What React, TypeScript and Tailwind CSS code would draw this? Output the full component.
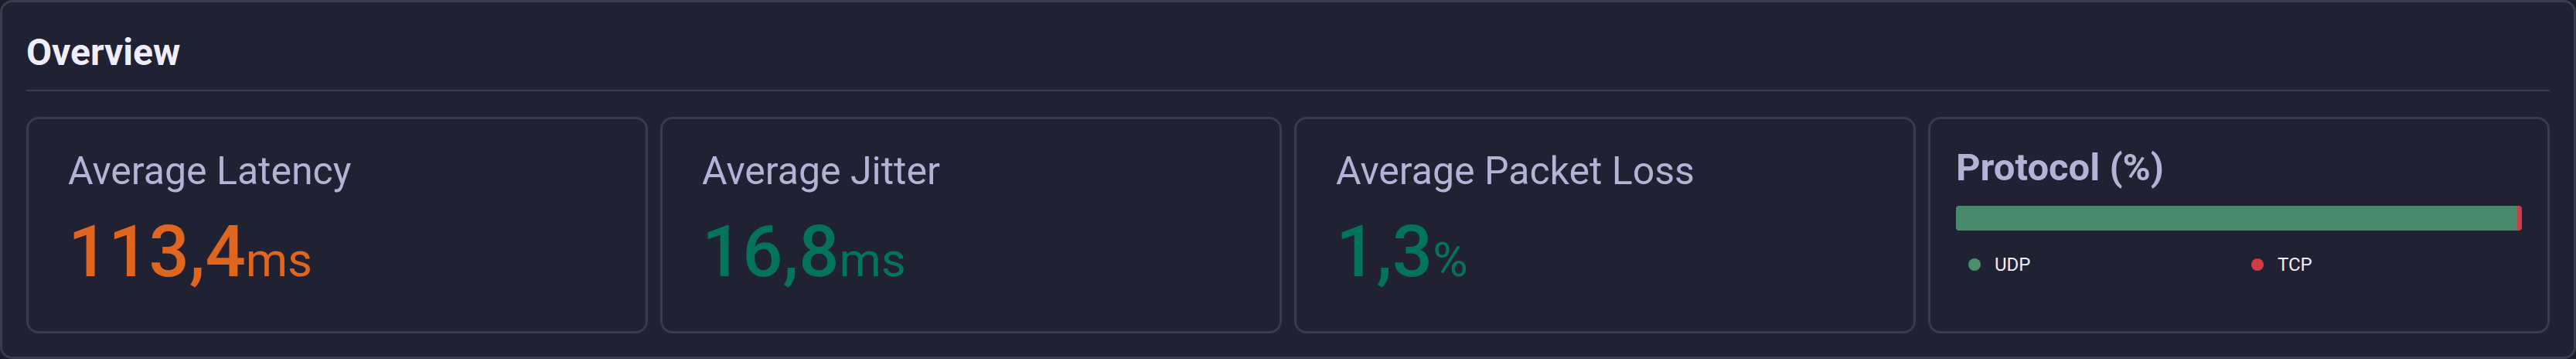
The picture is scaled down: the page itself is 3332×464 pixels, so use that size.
import React from "react";

type Metric = {
  label: string;
  value: string;
  unit: string;
  color: string;
};

const metrics: Metric[] = [
  { label: "Average Latency", value: "113,4", unit: "ms", color: "text-[#e0661f]" },
  { label: "Average Jitter", value: "16,8", unit: "ms", color: "text-[#03745a]" },
  { label: "Average Packet Loss", value: "1,3", unit: "%", color: "text-[#03745a]" },
];

const protocols = [
  { name: "UDP", share: 99.18, bar: "bg-[#488a6b]", dot: "bg-[#47906b]" },
  { name: "TCP", share: 0.82, bar: "bg-[#cd3b45]", dot: "bg-[#d13b45]" },
];

const MetricCard = ({ metric }: { metric: Metric }) => (
  <div className="rounded-[16px] border-[3px] border-[#3a3b4f] bg-[#202132] px-[51px] pt-[42px] pb-[56px]">
    <div className="text-[50px] leading-none font-normal text-[#b3b3d6]">{metric.label}</div>
    <div className={`mt-[34px] leading-none ${metric.color}`}>
      <span className="text-[92px] font-medium">{metric.value}</span>
      <span className="text-[62px] font-normal">{metric.unit}</span>
    </div>
  </div>
);

const ProtocolCard = () => (
  <div className="rounded-[16px] border-[3px] border-[#3a3b4f] bg-[#202132] px-[33px] pt-[38px]">
    <div className="text-[49px] leading-none font-bold text-[#b3b3d6]">Protocol (%)</div>
    {/* stacked share bar */}
    <div className="mt-[25px] flex h-[32px] w-full overflow-hidden rounded-[4px]">
      {protocols.map((p) => (
        <div key={p.name} className={`${p.bar} h-full`} style={{ width: `${p.share}%` }} />
      ))}
    </div>
    <div className="mt-[32px] grid grid-cols-2">
      {protocols.map((p) => (
        <div key={p.name} className="flex items-center gap-[18px] pl-[16px]">
          <span className={`h-[16px] w-[16px] rounded-full ${p.dot}`} />
          <span className="text-[24px] leading-none text-[#eceef8]">{p.name}</span>
        </div>
      ))}
    </div>
  </div>
);

const App = () => {
  return (
    <div
      className="min-h-[464px] w-full bg-[#1b1c2b]"
      style={{ fontFamily: "Roboto, 'Noto Sans', sans-serif" }}
    >
      <div className="h-[464px] rounded-[16px] border-[3px] border-[#3a3b4f] bg-[#202132] px-[31px] pt-[41px] pb-[30px]">
        <div className="border-b-2 border-[#393a4e] pb-[24px]">
          <h2 className="text-[48px] leading-none font-bold text-[#eeeeff]">Overview</h2>
        </div>
        <div className="mt-[33px] grid grid-cols-4 gap-[16px]">
          {metrics.map((m) => (
            <MetricCard key={m.label} metric={m} />
          ))}
          <ProtocolCard />
        </div>
      </div>
    </div>
  );
};

export default App;
